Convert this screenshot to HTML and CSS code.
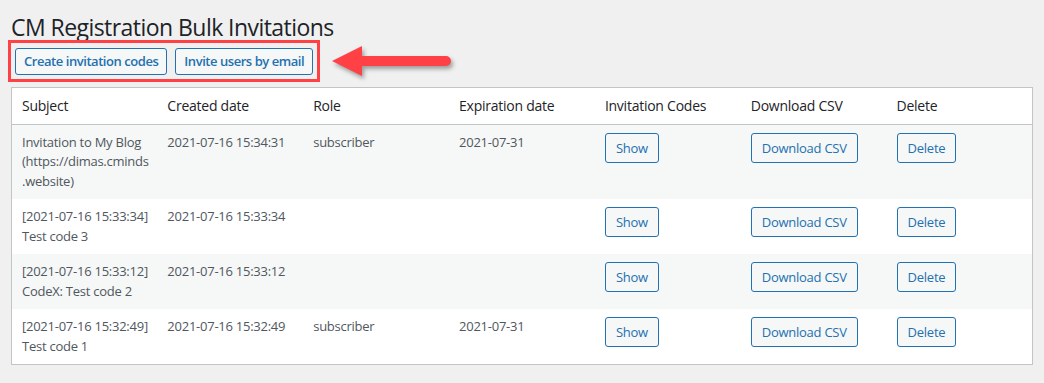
FILE: index.html
```html
<!DOCTYPE html>
<html lang="en">
<head>
  <meta charset="UTF-8">
  <title>CM Registration Bulk Invitations</title>
  <link rel="stylesheet" href="styles.css">
</head>
<body>
  <div class="wrap">
    <h1 class="page-title">CM Registration Bulk Invitations</h1>

    <div class="actions">
      <div class="highlight">
        <a href="#" class="button button-top">Create invitation codes</a>
        <a href="#" class="button button-top">Invite users by email</a>
      </div>
      <svg class="arrow" width="130" height="40" viewBox="0 0 130 40">
        <path d="M3 20 L33 5 L33 15 L117 15 A5 5 0 0 1 117 25 L33 25 L33 35 Z" fill="#ff4146"/>
      </svg>
    </div>

    <table class="invites">
      <thead>
        <tr>
          <th>Subject</th>
          <th>Created date</th>
          <th>Role</th>
          <th>Expiration date</th>
          <th>Invitation Codes</th>
          <th>Download CSV</th>
          <th>Delete</th>
        </tr>
      </thead>
      <tbody>
        <tr class="alt">
          <td class="subject">Invitation to My Blog<br>(https://dimas.cminds<br>.website)</td>
          <td>2021-07-16 15:34:31</td>
          <td>subscriber</td>
          <td>2021-07-31</td>
          <td><a href="#" class="button">Show</a></td>
          <td><a href="#" class="button">Download CSV</a></td>
          <td><a href="#" class="button">Delete</a></td>
        </tr>
        <tr>
          <td class="subject">[2021-07-16 15:33:34]<br>Test code 3</td>
          <td>2021-07-16 15:33:34</td>
          <td></td>
          <td></td>
          <td><a href="#" class="button">Show</a></td>
          <td><a href="#" class="button">Download CSV</a></td>
          <td><a href="#" class="button">Delete</a></td>
        </tr>
        <tr class="alt">
          <td class="subject">[2021-07-16 15:33:12]<br>CodeX: Test code 2</td>
          <td>2021-07-16 15:33:12</td>
          <td></td>
          <td></td>
          <td><a href="#" class="button">Show</a></td>
          <td><a href="#" class="button">Download CSV</a></td>
          <td><a href="#" class="button">Delete</a></td>
        </tr>
        <tr>
          <td class="subject">[2021-07-16 15:32:49]<br>Test code 1</td>
          <td>2021-07-16 15:32:49</td>
          <td>subscriber</td>
          <td>2021-07-31</td>
          <td><a href="#" class="button">Show</a></td>
          <td><a href="#" class="button">Download CSV</a></td>
          <td><a href="#" class="button">Delete</a></td>
        </tr>
      </tbody>
    </table>
  </div>
</body>
</html>
```

FILE: styles.css
```css
/* Base */
body {
  margin: 0;
  background-color: #f0f0f1;
  color: #3c434a;
  font-family: "Segoe UI", "Open Sans", sans-serif;
  font-size: 13px;
  letter-spacing: -0.25px;
}

.wrap {
  padding: 0 11px;
}

/* Title */
.page-title {
  margin: 0;
  padding-top: 15px;
  font-size: 23px;
  font-weight: 400;
  line-height: 25px;
  letter-spacing: -0.55px;
  color: #1d2327;
}

/* Highlighted actions */
.actions {
  display: flex;
  align-items: center;
}

.highlight {
  display: flex;
  gap: 8px;
  margin-left: -3px;
  padding: 5px 4px 4px;
  border: 3px solid #ff4146;
}

.arrow {
  margin-left: 9px;
  filter: drop-shadow(2px 3px 2px rgba(0, 0, 0, 0.35));
}

/* Buttons */
.button {
  display: inline-block;
  box-sizing: border-box;
  height: 30px;
  padding: 0 10px;
  border: 1px solid #2271b1;
  border-radius: 3px;
  background-color: #f6f7f7;
  color: #2271b1;
  font-size: 13px;
  line-height: 28px;
  text-decoration: none;
  white-space: nowrap;
  vertical-align: top;
}

.button-top {
  height: 27px;
  padding: 0 8px;
  line-height: 25px;
  font-weight: 600;
  letter-spacing: -0.45px;
}

/* Table */
.invites {
  width: 100%;
  margin-top: 5px;
  table-layout: fixed;
  border-collapse: collapse;
  border: 1px solid #c3c4c7;
  background-color: #fff;
}

.invites th {
  padding: 8px 10px;
  border-bottom: 1px solid #c3c4c7;
  font-size: 14px;
  font-weight: 400;
  line-height: 1.4em;
  text-align: left;
  color: #1d2327;
}

.invites td {
  padding: 8px 10px;
  font-size: 13px;
  line-height: 1.5em;
  color: #50575e;
  vertical-align: top;
}

.invites td.subject {
  white-space: nowrap;
}

.invites tr.alt {
  background-color: #f6f7f7;
}
```
